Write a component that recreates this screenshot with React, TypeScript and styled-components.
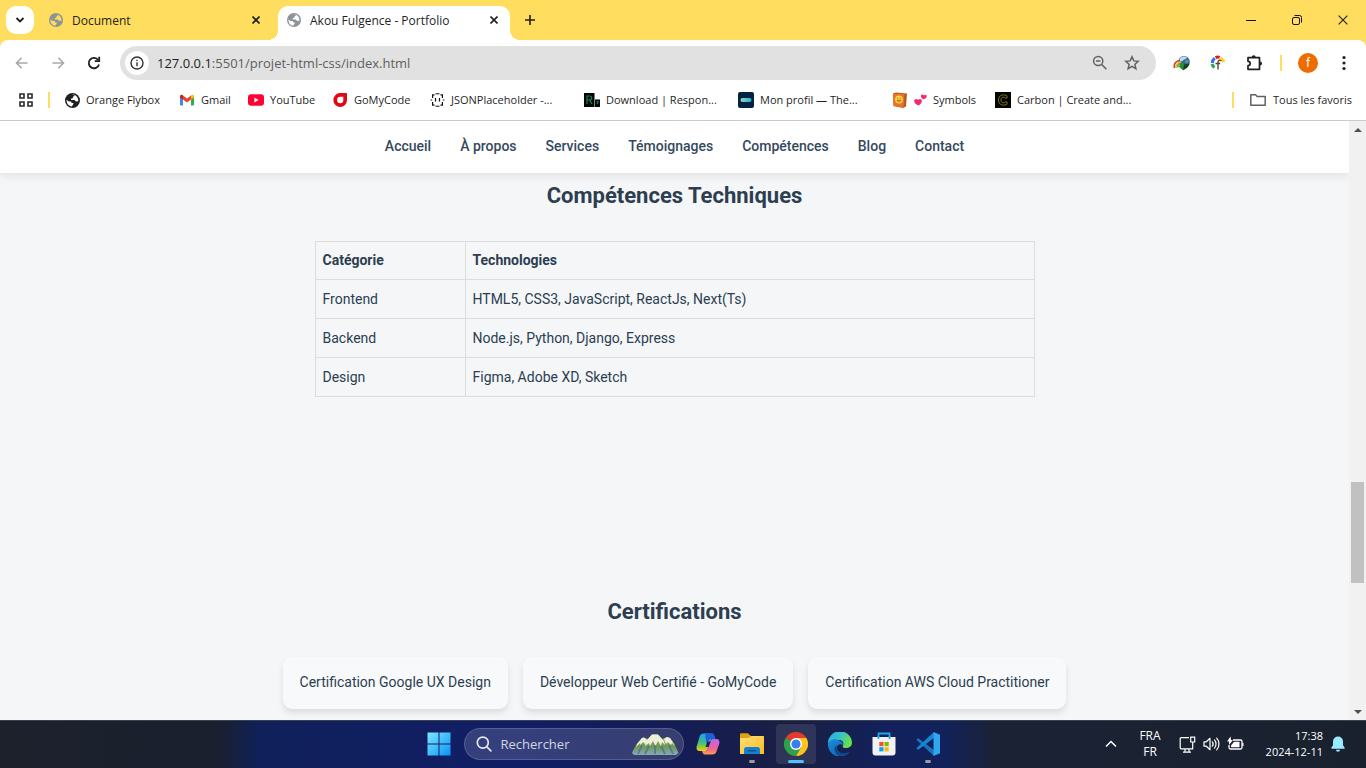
import React from "react";
import styled, { createGlobalStyle } from "styled-components";

const GlobalStyle = createGlobalStyle`
  *, *::before, *::after { box-sizing: border-box; }
  html, body, #root { height: 100%; }
  body { margin: 0; overflow: hidden; font-family: "Open Sans", "Noto Sans", sans-serif; font-size: 12px; color: #1f1f1f; }
  button { border: 0; padding: 0; background: none; color: inherit; font: inherit; }
  input { font: inherit; }
  a { color: inherit; text-decoration: none; }
  svg { display: block; flex: none; }
`;

const Desktop = styled.div`
  display: flex;
  flex-direction: column;
  height: 100vh;
`;

/* ---------- Tab strip ---------- */

const TabStrip = styled.header`
  display: flex;
  align-items: flex-end;
  height: 40px;
  flex: none;
  padding-left: 6px;
  background: #ffdd5e;
`;

const TabSearch = styled.button`
  display: grid;
  place-items: center;
  width: 28px;
  height: 28px;
  margin: 0 4px 6px 0;
  border-radius: 10px;
  background: #fff;
`;

const Tab = styled.div<{ $active?: boolean }>`
  position: relative;
  display: flex;
  align-items: center;
  gap: 9px;
  width: ${(p) => (p.$active ? 232 : 240)}px;
  height: 34px;
  padding: 0 ${(p) => (p.$active ? 8 : 14)}px 6px ${(p) => (p.$active ? 9 : 11)}px;
  border-radius: 10px 10px 0 0;
  background: ${(p) => (p.$active ? "#fff" : "transparent")};

  &::before,
  &::after {
    content: "";
    display: ${(p) => (p.$active ? "block" : "none")};
    position: absolute;
    bottom: 0;
    width: 10px;
    height: 10px;
  }
  &::before {
    left: -10px;
    background: radial-gradient(circle at 0 0, transparent 10px, #fff 10px);
  }
  &::after {
    right: -10px;
    background: radial-gradient(circle at 100% 0, transparent 10px, #fff 10px);
  }
`;

const TabTitle = styled.span`
  flex: 1;
  white-space: nowrap;
`;

const SmallButton = styled.button`
  display: grid;
  place-items: center;
  width: 16px;
  height: 16px;
`;

const NewTab = styled(SmallButton)`
  width: 28px;
  height: 28px;
  margin: 0 auto 6px 6px;
`;

const WindowButtons = styled.div`
  display: flex;
  align-self: stretch;
`;

const WindowButton = styled.button`
  display: grid;
  place-items: center;
  width: 46px;
`;

/* ---------- Toolbar ---------- */

const Chrome = styled.div`
  flex: none;
  background: #ffdd5e;
`;

const ChromeInner = styled.div`
  border-radius: 8px 8px 0 0;
  border-bottom: 1px solid #c9c9c9;
  background: #fff;
`;

const Toolbar = styled.div`
  display: flex;
  align-items: center;
  height: 46px;
  padding: 0 4px;
`;

const ToolButton = styled.button`
  display: grid;
  place-items: center;
  width: 36px;
  height: 32px;
`;

const Omnibox = styled.div`
  display: flex;
  align-items: center;
  flex: 1;
  height: 34px;
  margin: 0 8px;
  padding: 0 8px 0 5px;
  border-radius: 17px;
  background: #e1e1e1;
`;

const SiteInfo = styled.button`
  display: grid;
  place-items: center;
  width: 24px;
  height: 24px;
  border-radius: 12px;
  background: #fff;
`;

const Url = styled.div`
  flex: 1;
  margin-left: 8px;
  font-size: 13px;
  line-height: 20px;
  white-space: nowrap;
  color: #5f5f5f;
`;

const Host = styled.span`
  color: #1f1f1f;
`;

const OmniButton = styled(ToolButton)`
  width: 32px;
`;

const Divider = styled.span<{ $before?: number; $after?: number }>`
  flex: none;
  width: 2px;
  height: 16px;
  margin: 0 ${(p) => p.$after ?? 8}px 0 ${(p) => p.$before ?? 8}px;
  background: #ffdd5e;
`;

const Avatar = styled.span`
  display: grid;
  place-items: center;
  width: 20px;
  height: 20px;
  border-radius: 10px;
  background: #ef6c00;
  color: #fff;
  font: 12px/20px Roboto, sans-serif;
`;

const BookmarkBar = styled.nav`
  display: flex;
  align-items: center;
  height: 34px;
  padding: 0 14px 6px 18px;
  font-size: 11px;
`;

const Bookmark = styled.a<{ $width?: number }>`
  display: flex;
  align-items: center;
  gap: 6px;
  flex: none;
  width: ${(p) => (p.$width ? `${p.$width}px` : "auto")};
  line-height: 16px;
  white-space: nowrap;
`;

const BookmarkSpacer = styled.span`
  flex: 1;
`;

/* ---------- Web page ---------- */

const Viewport = styled.div`
  display: flex;
  flex: 1;
  min-height: 0;
`;

const Page = styled.div`
  flex: 1;
  overflow: hidden;
  background: #f4f6f8;
  color: #2c3e50;
  font-family: Roboto, sans-serif;
  font-size: 14px;
  line-height: 24px;
`;

const SiteNav = styled.nav`
  display: flex;
  justify-content: center;
  gap: 29px;
  padding: 13px 0 15px;
  background: #fff;
  box-shadow: 0 2px 9px rgba(0, 0, 0, 0.1);
  font-weight: 500;
  color: #34495e;
`;

const Section = styled.section<{ $space?: number }>`
  padding: 6px 16px ${(p) => p.$space ?? 0}px;
`;

const Title = styled.h2`
  margin: 0 0 28px;
  font-size: 22px;
  line-height: 34px;
  font-weight: 700;
  text-align: center;
`;

const SkillTable = styled.table`
  width: 100%;
  max-width: 720px;
  margin: 0 auto;
  border-collapse: collapse;
`;

const cell = `
  border: 1px solid #dddddd;
  text-align: left;
`;
const HeadCell = styled.th`
  ${cell}
  padding: 6px 7px 7px;
  &:first-child { width: 150px; }
`;
const Cell = styled.td`
  ${cell}
  padding: 7px;
`;

const Cards = styled.ul`
  display: flex;
  flex-wrap: wrap;
  justify-content: center;
  gap: 15px;
  margin: 0;
  padding: 0;
  list-style: none;
`;

const Card = styled.li`
  padding: 13px 17px 15px;
  border-radius: 9px;
  background: #f8f9fb;
  box-shadow: 0 4px 6px rgba(0, 0, 0, 0.1);
`;

const Scrollbar = styled.div`
  display: flex;
  flex-direction: column;
  align-items: center;
  flex: none;
  width: 17px;
  background: #f1f1f1;
`;

const ScrollArrow = styled.button`
  display: grid;
  place-items: center;
  width: 17px;
  height: 17px;
`;

const ScrollTrack = styled.div`
  display: flex;
  flex-direction: column;
  flex: 1;
`;

const ScrollLead = styled.span`
  flex: 344;
`;
const ScrollThumb = styled.span`
  flex: 101;
  width: 13px;
  background: #c1c1c1;
`;
const ScrollTail = styled.span`
  flex: 120;
`;

/* ---------- Taskbar ---------- */

const Taskbar = styled.footer`
  display: grid;
  grid-template-columns: 1fr auto 1fr;
  align-items: center;
  flex: none;
  height: 48px;
  box-shadow: inset 0 1px #3a4150;
  background: linear-gradient(90deg, #1c212c 0%, #1a202e 16%, #10205a 19%, #111e66 38%, #141d56 50%, #1a1f42 58%, #12215c 65%, #12215c 69%, #1b2234 73%, #1a212e 100%);
  color: #fff;
`;

const TaskCenter = styled.div`
  grid-column: 2;
  display: flex;
  align-items: center;
  gap: 4px;
`;

const TaskButton = styled.button<{ $active?: boolean; $mark?: boolean }>`
  position: relative;
  display: grid;
  place-items: center;
  width: 40px;
  height: 40px;
  border-radius: 4px;
  background: ${(p) => (p.$active ? "rgba(255, 255, 255, 0.1)" : "transparent")};

  &::after {
    content: "";
    display: ${(p) => (p.$mark ? "block" : "none")};
    position: absolute;
    bottom: 1px;
    width: ${(p) => (p.$active ? 16 : 6)}px;
    height: 3px;
    border-radius: 2px;
    background: ${(p) => (p.$active ? "#4cc2ff" : "#9a9ca8")};
  }
`;

const SearchBox = styled.label`
  display: flex;
  align-items: center;
  width: 220px;
  height: 32px;
  margin-left: 1px;
  padding: 0 4px 0 11px;
  border: 1px solid rgba(255, 255, 255, 0.16);
  border-radius: 16px;
  background: rgba(255, 255, 255, 0.15);
`;

const SearchInput = styled.input`
  flex: 1;
  min-width: 0;
  margin-left: 9px;
  padding: 0;
  border: 0;
  outline: 0;
  background: none;
  font-size: 13px;
  &::placeholder { color: #d3d6e2; opacity: 1; }
`;

const Tray = styled.div`
  grid-column: 3;
  display: flex;
  align-items: center;
  justify-content: flex-end;
  padding-right: 21px;
  line-height: 16px;
`;

const Lang = styled.button`
  width: 36px;
  margin: 0 11px 0 13px;
  text-align: center;
  line-height: 16px;
`;

const TrayIcons = styled.div`
  display: flex;
  align-items: center;
  gap: 7px;
`;

const Clock = styled.time`
  width: 79px;
  margin-right: 8px;
  text-align: right;
  font-size: 11px;
`;

/* ---------- Icons ---------- */

const Globe = ({ color, bg, size = 14 }: { color: string; bg: string; size?: number }) => (
  <svg width={size} height={size} viewBox="0 0 14 14">
    <circle cx="7" cy="7" r="7" fill={color} />
    <path d="M1.4 6.4 3.6 8h2.1l.5 1.4H8L7.4 11l-1 1.5C3.6 12.6 1.4 10 1.4 6.4Z" fill={bg} />
    <path d="M6.2 1.6 8.6 1.5 8.8 2.7 7.4 3.5 7.3 4.8 5.5 5.4 5.7 6.6 8.8 6.5 10.2 8 12.4 7.8C12.7 5 11.2 2.8 9 1.8Z" fill={bg} />
  </svg>
);

const CloseIcon = ({ size = 8, w = 1.6 }: { size?: number; w?: number }) => (
  <svg width={size} height={size} viewBox="0 0 8 8" stroke="#1f1f1f" strokeWidth={w} fill="none">
    <path d="m.5.5 7 7m0-7-7 7" />
  </svg>
);

const Arrow = ({ flip }: { flip?: boolean }) => (
  <svg width="16" height="16" viewBox="0 0 16 16" fill="none" stroke="#a8a8a8" strokeWidth="1.6">
    {flip ? <path d="M2.5 8H13M8.3 2.8 13.5 8l-5.2 5.2" /> : <path d="M13.5 8H3M7.7 2.8 2.5 8l5.2 5.2" />}
  </svg>
);

const ReloadIcon = () => (
  <svg width="16" height="16" viewBox="0 0 16 16" fill="none" stroke="#1f1f1f" strokeWidth="1.8">
    <path d="M13 9.4A5.2 5.2 0 1 1 12.2 5" />
    <path d="M13.2 1.8V6.2H8.8" />
  </svg>
);

const InfoIcon = () => (
  <svg width="14" height="14" viewBox="0 0 14 14" fill="none" stroke="#333" strokeWidth="1.4">
    <circle cx="7" cy="7" r="6" />
    <path d="M7 6.2V10.3M7 3.7V5" />
  </svg>
);

const ZoomOutIcon = () => (
  <svg width="16" height="16" viewBox="0 0 16 16" fill="none" stroke="#5f6163" strokeWidth="1.5">
    <circle cx="6.2" cy="6" r="4.6" />
    <path d="m9.7 9.5 4.7 4.8M4 6h4.4" />
  </svg>
);

const StarIcon = () => (
  <svg width="16" height="16" viewBox="0 0 16 16" fill="none" stroke="#5f6163" strokeWidth="1.5">
    <path d="m8 1.8 1.8 4.1 4.5.4-3.4 3 1 4.4L8 11.4l-3.9 2.3 1-4.4-3.4-3 4.5-.4Z" />
  </svg>
);

const IdmIcon = () => (
  <svg width="18" height="16" viewBox="0 0 18 16">
    <circle cx="11" cy="6.8" r="5.8" fill="#2c62b4" />
    <path d="M7.500 3c2-2 5-2 6.500-.5-1 2-2.500 1.500-3.500 2.500S8 7 7 6s-.2-2.300.5-3Z" fill="#c4dce8" />
    <path d="M12.500 5c1.500-.5 3 0 3.500 1.500l-2 2-2-1Z" fill="#6f9c52" />
    <path d="M1.500 13C.5 9 3 5.500 7 5.500" fill="none" stroke="#d93a2b" strokeWidth="1.600" />
    <path d="M3 13C2.500 10 4.500 7 8 7" fill="none" stroke="#f2c230" strokeWidth="1.600" />
    <path d="M4.500 12.500C4.500 10.500 6 8.500 9 8.500" fill="none" stroke="#5db53c" strokeWidth="1.800" />
    <path d="M7 8h4v2.200h3.500L10 15.200 5.500 11.500 7.500 10.500Z" fill="#2d8f2c" />
    <path d="M11 9.500 16.500 8.500C16 12 13 13.800 10 15.200Z" fill="#14461c" />
  </svg>
);

const FontPickerIcon = () => (
  <svg width="16" height="16" viewBox="0 0 16 16" fill="none" strokeWidth="3">
    <path d="M4.500 12.500A6 6 0 0 1 2 9" stroke="#2aa84a" />
    <path d="M2.300 8A6 6 0 0 1 4.800 3.300" stroke="#2277ee" />
    <path d="M5.500 2.600a6 6 0 0 1 4.200-.2" stroke="#e81515" />
    <path d="M10.700 3a6 6 0 0 1 3 4.200" stroke="#ffd21c" />
    <path d="M11.500 5.600C8.500 4.700 8 6 8 8v6.500M5.500 8.500h4.700" stroke="#5a4430" strokeWidth="1.400" />
  </svg>
);

const PuzzleIcon = () => (
  <svg width="18" height="18" viewBox="0 0 18 18">
    <path d="M3 3.700h11.500v11.600H3v-3.600c1.500 0 2.200-1 2.200-2.200S4.500 7.300 3 7.300Z" fill="none" stroke="#1f1f1f" strokeWidth="1.700" strokeLinejoin="round" />
    <path d="M6.700 3.200a2 2 0 0 1 4 0ZM15 7.500a2 2 0 0 1 0 4Z" fill="#1f1f1f" />
  </svg>
);

const DotsIcon = () => (
  <svg width="4" height="16" viewBox="0 0 4 16" fill="#1f1f1f">
    <circle cx="2" cy="2.500" r="1.600" /><circle cx="2" cy="8" r="1.600" /><circle cx="2" cy="13.500" r="1.600" />
  </svg>
);

const GridIcon = () => (
  <svg width="16" height="16" viewBox="0 0 16 16" fill="none" stroke="#2a2a2a" strokeWidth="1.600">
    <path d="M2 2h4v4H2ZM10 2h4v4h-4ZM2 10h4v4H2ZM10 10h4v4h-4Z" />
  </svg>
);

const GmailIcon = () => (
  <svg width="16" height="16" viewBox="0 0 16 16">
    <path d="M1 4.500 4 6.500V13.500H2a1 1 0 0 1-1-1Z" fill="#4285f4" />
    <path d="M15 4.500 12 6.500V13.500h2a1 1 0 0 0 1-1Z" fill="#34a853" />
    <path d="M4 3.500 8 6.500 12 3.500V7.500L8 10.500 4 7.500Z" fill="#ea4335" />
    <path d="M12 3.300c1.500-1.200 3-.5 3 1.200v.9L12 7.600Z" fill="#fbbc04" />
    <path d="M4 3.300C2.500 2.100 1 2.800 1 4.500v.9L4 7.600Z" fill="#c5221f" />
  </svg>
);

const YoutubeIcon = () => (
  <svg width="16" height="16" viewBox="0 0 16 16">
    <rect y="2.300" width="16" height="11.400" rx="3" fill="#ff0033" />
    <path d="M6.400 5.600v4.800L10.600 8Z" fill="#fff" />
  </svg>
);

const GoMyCodeIcon = () => (
  <svg width="15" height="16" viewBox="0 0 15 16">
    <path d="M7 1h6.300c.5 0 .7.300.7.700V8A6.800 7 0 1 1 7 1Z" fill="#e30613" />
    <path d="M7.200 4.800h3.100V8a3.100 3.200 0 1 1-3.100-3.200Z" fill="#fff" />
  </svg>
);

const JsonIcon = () => (
  <svg width="15" height="16" viewBox="0 0 15 16" fill="none" stroke="#111" strokeWidth="1.200">
    <path d="M5.500 1.800h4M5.500 14.200h4" strokeWidth="1" />
    <path d="M4.500 2.800H2.600V6M10.500 2.800h1.900V6M4.500 13.200H2.600V10M10.500 13.200h1.900V10" />
    <path d="M.6 8h1.600M12.800 8h1.600" />
    <path d="M5.500 6v3.500M9.500 6v3.500" />
  </svg>
);

const ResponsivelyIcon = () => (
  <svg width="16" height="16" viewBox="0 0 16 16">
    <path d="M0 1h10.500v14H0ZM11 7.500h5V15h-5Z" fill="#020606" />
    <path d="M3 12V4h2.500c3 0 3 4 0 4H3m2.500 0L8 12M12.500 9.500h1.500L13.200 12" fill="none" stroke="#19805c" strokeWidth="1.200" />
  </svg>
);

const ForageIcon = () => (
  <svg width="16" height="16" viewBox="0 0 16 16">
    <defs><linearGradient id="pill"><stop stopColor="#94d6b8" /><stop offset="1" stopColor="#23b0dc" /></linearGradient></defs>
    <rect width="16" height="16" rx="2" fill="#04233f" />
    <rect x="2.500" y="6" width="11" height="4" rx="2" fill="url(#pill)" />
  </svg>
);

const BookIcon = () => (
  <svg width="16" height="16" viewBox="0 0 16 16">
    <path d="M1 1.500 4 .5l11 1-1 13-3 1.500L1.500 14Z" fill="#b55a24" />
    <path d="M1 1.500 12.500 2 11.500 15.500 1.500 14Z" fill="#e87424" />
    <circle cx="7" cy="7.500" r="3.900" fill="#ffd24a" />
    <path d="M5 8.300c.6 2 3.200 2 4 0ZM5.500 5.500v1.300M8.300 5.500v1.300" stroke="#9a5010" strokeWidth=".8" fill="none" />
  </svg>
);

const HeartsIcon = () => (
  <svg width="13" height="14" viewBox="0 0 13 14" fill="#f8296a" role="img" aria-label="💕">
    <path d="M4.800 12.600C2 11.500.3 10 .2 8.200.1 6 2.700 5 4.100 6.900 5.400 5.300 8 6 7.900 8c-.1 1.800-1.600 3.200-3.100 4.600Z" />
    <path d="M10 6.300C7.800 5.300 6.700 4.300 6.900 2.900 7.200 1.300 9.200 1 9.900 2.400 11.200 1.200 13 2.100 12.700 3.700 12.500 5 11.300 5.700 10 6.300Z" />
  </svg>
);

const CarbonIcon = () => (
  <svg width="16" height="16" viewBox="0 0 16 16" fill="none">
    <path d="M0 0h16v16H0Z" fill="#050500" />
    <path d="M12 6V3.800C9 2 3.500 2.500 3.500 8S9 14 12 12.200V10M10.200 6C8.500 4.500 6 5 6 8s2.500 3.500 4.200 2M10.200 6H12M10.200 10H12" stroke="#8c7d1e" strokeWidth=".9" />
  </svg>
);

const FolderIcon = () => (
  <svg width="18" height="16" viewBox="0 0 18 16" fill="none" stroke="#5f6163" strokeWidth="1.500">
    <path d="M1.800 2.800h4.700l1.700 1.800h8v8.600H1.800Z" strokeLinejoin="round" />
  </svg>
);

const Caret = ({ down }: { down?: boolean }) => (
  <svg width="8" height="4" viewBox="0 0 8 4" fill="#505050">
    <path d={down ? "M0 0h8L4 4Z" : "M0 4h8L4 0Z"} />
  </svg>
);

const WindowsIcon = () => (
  <svg width="24" height="24" viewBox="0 0 24 24">
    <defs><linearGradient id="win" x1="0" y1="0" x2="1" y2="1"><stop stopColor="#7ce8ff" /><stop offset="1" stopColor="#0a93f5" /></linearGradient></defs>
    <path d="M.5.500h11v11H.5ZM12.500.500h11v11h-11ZM.5 12.500h11v11H.5ZM12.500 12.500h11v11h-11Z" fill="url(#win)" />
  </svg>
);

const SearchIcon = () => (
  <svg width="16" height="16" viewBox="0 0 16 16" fill="none" stroke="#e4e6ee" strokeWidth="1.700" strokeLinecap="round">
    <circle cx="6.800" cy="6.600" r="5.500" /><path d="m10.900 10.800 4 4" />
  </svg>
);

const MountainIcon = () => (
  <svg width="48" height="22" viewBox="0 0 48 22">
    <defs><linearGradient id="hill" x1="0" y1="0" x2="0" y2="1"><stop stopColor="#a3ae8c" /><stop offset=".6" stopColor="#6d9a52" /><stop offset="1" stopColor="#86aab8" /></linearGradient></defs>
    <path d="M1 20C4 13 7 9 11 5l2-.5 4 1.500L21 1.500h6L31 6l5-2 3 1c4 4 6 9 8.500 15L45 22H3Z" fill="url(#hill)" />
    <path d="M15 8 21 1.500h6L33 8l1 4-3-3-1 4-3-5-2.500 5L22 8l-3 5-1-3-4 3ZM6 11 11 5l2-.5L16 7l-2 4-2-2-2.500 3L9 10l-4 4ZM33 6l3-2 3 1 5 8-3-3-1 2-3-3-2 2Z" fill="#eef0d8" />
    <path d="m11 12-4 9M18 13l-4 8M24 12v9M30 13l4 8M38 12l4 9" stroke="#4f669c" strokeWidth="1.800" opacity=".7" />
  </svg>
);

const CopilotIcon = () => (
  <svg width="24" height="24" viewBox="0 0 24 24">
    <defs>
      <linearGradient id="cpl" x1="0" y1="0" x2="0" y2="1"><stop stopColor="#1fa0f5" /><stop offset=".55" stopColor="#45c07a" /><stop offset="1" stopColor="#f5d100" /></linearGradient>
      <linearGradient id="cpr" x1="0" y1="0" x2="0" y2="1"><stop stopColor="#b868f5" /><stop offset=".6" stopColor="#f0609a" /><stop offset="1" stopColor="#ff9a4a" /></linearGradient>
    </defs>
    <path d="M8 1.500h8c1.700 0 2 1.500 2.500 3l.8 2.500h-4L12 16c-.8 2.500-2 3-4 3H4c-3 0-4-2-3.200-5l2.500-8.500C4 3 5 1.500 8 1.500Z" fill="url(#cpl)" />
    <path d="M11 1.500h5c1.700 0 2 1.500 2.500 3l.8 2.500h-4c-2 0-2.700 1-3.300 3L11 13 9.500 6C9 3.500 9.500 1.500 11 1.500Z" fill="#1d5fd8" />
    <path d="M16 22.500H9c-1.700 0-2.500-1.500-3-3.500h2c2 0 3.200-.5 4-3l2.500-7c.6-1.500 1.500-2 3-2H20c3 0 4 2 3.200 5l-2.500 7c-.8 2.500-2 3.500-4.700 3.500Z" fill="url(#cpr)" />
    <path d="M11.500 9.500h3.200L12.500 15H9.500Z" fill="#1a2158" />
  </svg>
);

const ExplorerIcon = () => (
  <svg width="24" height="24" viewBox="0 0 24 24">
    <defs><linearGradient id="fold" x1="0" y1="0" x2="1" y2="1"><stop stopColor="#ffdf7a" /><stop offset="1" stopColor="#fdbb1e" /></linearGradient></defs>
    <path d="M0 2.500C0 1.700.6 1.200 1.300 1.200h6.500L11 4h11.700c.8 0 1.300.5 1.300 1.300V9H0Z" fill="#e0a10a" />
    <path d="M0 6h8.500L11 4h11.700c.8 0 1.300.5 1.300 1.300V22H0Z" fill="url(#fold)" />
    <path d="M4 22v-4.500C4 16 5 15 6.500 15h11c1.500 0 2.500 1 2.500 2.500V22Z" fill="#1580d2" />
    <path d="M8 18.700h8" stroke="#0c4f8c" strokeWidth="1.500" />
  </svg>
);

const ChromeIcon = () => (
  <svg width="24" height="24" viewBox="0 0 24 24">
    <path d="M12 12 1.600 6A12 12 0 0 1 22.400 6Z" fill="#e33b2e" />
    <path d="M12 12 1.600 6A12 12 0 0 0 12 24L17.200 15Z" fill="#2da14c" />
    <path d="M12 12V6H22.400A12 12 0 0 1 12 24L17.200 15Z" fill="#fcc31e" />
    <path d="M1.600 6 6.800 15 12 12Z" fill="#2da14c" />
    <circle cx="12" cy="12" r="6" fill="#fff" /><circle cx="12" cy="12" r="4.600" fill="#3b7ded" />
  </svg>
);

const EdgeIcon = () => (
  <svg width="24" height="24" viewBox="0 0 24 24">
    <defs>
      <linearGradient id="edt" x1="0" y1="0" x2="1" y2=".4"><stop stopColor="#2aa9e0" /><stop offset=".5" stopColor="#35c0d0" /><stop offset="1" stopColor="#67e04c" /></linearGradient>
      <linearGradient id="edb" x1="0" y1="0" x2="1" y2="1"><stop stopColor="#1c8fdf" /><stop offset="1" stopColor="#0b57a6" /></linearGradient>
    </defs>
    <path d="M0 12A12 12 0 0 1 24 10.500c0 4-3 5.500-6 5.500-2.500 0-4-1-3-2.500S15.500 8 11 8C5 8 1 10.500 0 12Z" fill="url(#edt)" />
    <path d="M0 12C1 8 5 6.500 9 7.500c4 1 6.500 3.500 6 5.500-3-2-7 0-6 4 1 3.500 4.500 5.500 9 4.500l3.500-1.500A12 12 0 0 1 0 12Z" fill="url(#edb)" />
    <path d="M9 13c-1.500 4 1.500 8 6 8.500 3 0 5-1 7-2.500A12 12 0 0 1 12 24c-5-1-8-8-3-11Z" fill="#0e4a94" />
  </svg>
);

const StoreIcon = () => (
  <svg width="24" height="24" viewBox="0 0 24 24">
    <path d="M6.500 6V1.500h11V6" fill="none" stroke="#1fa7e8" strokeWidth="1.800" />
    <path d="M.5 5h23v15.500a3 3 0 0 1-3 3h-17a3 3 0 0 1-3-3Z" fill="#f1f1f3" />
    <path d="M6.500 7V4M17.500 7V4" fill="none" stroke="#1fa7e8" strokeWidth="1.800" />
    <path d="M7.300 10h4.200v4.200H7.300Z" fill="#f25022" /><path d="M12.500 10h4.200v4.200h-4.200Z" fill="#7fba00" />
    <path d="M7.300 15.200h4.200v4.200H7.300Z" fill="#00a4ef" /><path d="M12.500 15.200h4.200v4.200h-4.200Z" fill="#ffb900" />
  </svg>
);

const CodeIcon = () => (
  <svg width="24" height="24" viewBox="0 0 24 24">
    <path d="M.3 7.800 2.200 6.200 18 18v6Z" fill="#1873bd" />
    <path d="M.3 16.200 2.200 17.800 18 6V0Z" fill="#1487d4" />
    <path d="M17.500 0 24 2.800V21.200L17.500 24Z" fill="#31a6f0" />
  </svg>
);

const NetworkIcon = () => (
  <svg width="17" height="17" viewBox="0 0 17 17" fill="none" stroke="#fff" strokeWidth="1.200">
    <path d="M10 1.600H2.200A1 1 0 0 0 1.200 2.600v9.200a1 1 0 0 0 1 1h11.500V8M6 13v3M10 13v3M4 16.200h8M11.700 1.200h4V6h-4ZM13.700 6v7" />
  </svg>
);

const SpeakerIcon = () => (
  <svg width="17" height="16" viewBox="0 0 17 16" fill="none" stroke="#fff" strokeWidth="1.200" strokeLinecap="round" strokeLinejoin="round">
    <path d="M1 5.800h2.300L7 2.300v11.400L3.300 10.200H1ZM9.300 5.800c1 1.200 1 3.200 0 4.400M11.500 3.900c2 2.200 2 6 0 8.200M13.700 2.100c3 3.200 3 8.600 0 11.800" />
  </svg>
);

const BatteryIcon = () => (
  <svg width="17" height="16" viewBox="0 0 17 16">
    <path d="M6 4h7.500a1.500 1.500 0 0 1 1.500 1.500v6a1.500 1.500 0 0 1-1.500 1.500h-10A1.500 1.500 0 0 1 2 11.500V9" fill="none" stroke="#fff" strokeWidth="1.300" />
    <path d="M7 5.800h5.500v5.400H4V9.500ZM15.300 7h1.200v3h-1.200ZM3.500.5 0 5.500h2V9l4-5H4Z" fill="#fff" />
  </svg>
);

const BellIcon = () => (
  <svg width="14" height="16" viewBox="0 0 14 16" fill="#99ebff">
    <path d="M7 .5a5 5 0 0 1 5 5v3.700l1.700 2.600c.2.500 0 .9-.6.900H.9c-.6 0-.8-.4-.6-.9L2 9.200V5.500a5 5 0 0 1 5-5ZM5 13.700h4a2 2 0 0 1-4 0Z" />
  </svg>
);

/* ---------- Data ---------- */

const bookmarks = [
  { label: "Orange Flybox", width: 114, icon: <Globe color="#1f1f1f" bg="#fff" size={15} /> },
  { label: "Gmail", width: 69, icon: <GmailIcon /> },
  { label: "YouTube", width: 85, icon: <YoutubeIcon /> },
  { label: "GoMyCode", width: 97, icon: <GoMyCodeIcon /> },
  { label: "JSONPlaceholder -...", width: 154, icon: <JsonIcon /> },
  { label: "Download | Respon...", width: 154, icon: <ResponsivelyIcon /> },
  { label: "Mon profil — The...", width: 154, icon: <ForageIcon /> },
  { label: "Symbols", width: 103, icon: <><BookIcon /><HeartsIcon /></> },
  { label: "Carbon | Create and...", width: 140, icon: <CarbonIcon /> },
];

const links = ["Accueil", "À propos", "Services", "Témoignages", "Compétences", "Blog", "Contact"];

const skills = [
  ["Frontend", "HTML5, CSS3, JavaScript, ReactJs, Next(Ts)"],
  ["Backend", "Node.js, Python, Django, Express"],
  ["Design", "Figma, Adobe XD, Sketch"],
];

const certifications = [
  "Certification Google UX Design",
  "Développeur Web Certifié - GoMyCode",
  "Certification AWS Cloud Practitioner",
];

export default function App() {
  return (
    <Desktop>
      <GlobalStyle />
      <TabStrip>
        <TabSearch aria-label="Rechercher dans les onglets">
          <svg width="10" height="6" viewBox="0 0 10 6" fill="none" stroke="#1f1f1f" strokeWidth="1.800"><path d="m1.500 1 3.500 3.500L8.500 1" /></svg>
        </TabSearch>
        <Tab>
          <Globe color="#8e9398" bg="#ffdd5e" />
          <TabTitle>Document</TabTitle>
          <SmallButton aria-label="Fermer"><CloseIcon /></SmallButton>
        </Tab>
        <Tab $active>
          <Globe color="#8e9398" bg="#fff" />
          <TabTitle>Akou Fulgence - Portfolio</TabTitle>
          <SmallButton aria-label="Fermer"><CloseIcon /></SmallButton>
        </Tab>
        <NewTab aria-label="Nouvel onglet">
          <svg width="10" height="10" viewBox="0 0 10 10" stroke="#1f1f1f" strokeWidth="1.600"><path d="M5 0v10M0 5h10" /></svg>
        </NewTab>
        <WindowButtons>
          <WindowButton aria-label="Réduire">
            <svg width="10" height="10" viewBox="0 0 10 10" fill="#111"><path d="M0 5h10v1H0Z" /></svg>
          </WindowButton>
          <WindowButton aria-label="Restaurer">
            <svg width="10" height="10" viewBox="0 0 10 10" fill="none" stroke="#111"><rect x=".5" y="2.500" width="7" height="7" rx="1.500" /><path d="M2.500.500H7.500a2 2 0 0 1 2 2V7.500" /></svg>
          </WindowButton>
          <WindowButton aria-label="Fermer la fenêtre"><CloseIcon size={10} w={0.9} /></WindowButton>
        </WindowButtons>
      </TabStrip>

      <Chrome>
        <ChromeInner>
          <Toolbar>
            <ToolButton aria-label="Précédent"><Arrow /></ToolButton>
            <ToolButton aria-label="Suivant"><Arrow flip /></ToolButton>
            <ToolButton aria-label="Actualiser"><ReloadIcon /></ToolButton>
            <Omnibox>
              <SiteInfo aria-label="Informations sur le site"><InfoIcon /></SiteInfo>
              <Url><Host>127.0.0.1</Host>:5501/projet-html-css/index.html</Url>
              <OmniButton aria-label="Zoom"><ZoomOutIcon /></OmniButton>
              <OmniButton aria-label="Ajouter aux favoris"><StarIcon /></OmniButton>
            </Omnibox>
            <ToolButton aria-label="Téléchargements"><IdmIcon /></ToolButton>
            <ToolButton aria-label="Polices"><FontPickerIcon /></ToolButton>
            <ToolButton aria-label="Extensions"><PuzzleIcon /></ToolButton>
            <Divider />
            <ToolButton aria-label="Profil"><Avatar>f</Avatar></ToolButton>
            <ToolButton aria-label="Menu"><DotsIcon /></ToolButton>
          </Toolbar>
          <BookmarkBar>
            <SmallButton aria-label="Applications"><GridIcon /></SmallButton>
            <Divider $before={14} $after={15} />
            {bookmarks.map((b) => (
              <Bookmark href="#" key={b.label} $width={b.width}>{b.icon}{b.label}</Bookmark>
            ))}
            <BookmarkSpacer />
            <Divider $after={15} />
            <Bookmark href="#"><FolderIcon />Tous les favoris</Bookmark>
          </BookmarkBar>
        </ChromeInner>
      </Chrome>

      <Viewport>
        <Page>
          <SiteNav>
            {links.map((l) => <a href="#" key={l}>{l}</a>)}
          </SiteNav>
          <main>
            <Section $space={192}>
              <Title>Compétences Techniques</Title>
              <SkillTable>
                <thead>
                  <tr><HeadCell>Catégorie</HeadCell><HeadCell>Technologies</HeadCell></tr>
                </thead>
                <tbody>
                  {skills.map(([name, tech]) => (
                    <tr key={name}><Cell>{name}</Cell><Cell>{tech}</Cell></tr>
                  ))}
                </tbody>
              </SkillTable>
            </Section>
            <Section>
              <Title>Certifications</Title>
              <Cards>
                {certifications.map((c) => <Card key={c}>{c}</Card>)}
              </Cards>
            </Section>
          </main>
        </Page>
        <Scrollbar>
          <ScrollArrow aria-label="Défiler vers le haut"><Caret /></ScrollArrow>
          <ScrollTrack><ScrollLead /><ScrollThumb /><ScrollTail /></ScrollTrack>
          <ScrollArrow aria-label="Défiler vers le bas"><Caret down /></ScrollArrow>
        </Scrollbar>
      </Viewport>

      <Taskbar>
        <TaskCenter>
          <TaskButton aria-label="Démarrer"><WindowsIcon /></TaskButton>
          <SearchBox>
            <SearchIcon />
            <SearchInput placeholder="Rechercher" aria-label="Rechercher" />
            <MountainIcon />
          </SearchBox>
          <TaskButton aria-label="Copilot"><CopilotIcon /></TaskButton>
          <TaskButton $mark aria-label="Explorateur"><ExplorerIcon /></TaskButton>
          <TaskButton $active $mark aria-label="Chrome"><ChromeIcon /></TaskButton>
          <TaskButton aria-label="Edge"><EdgeIcon /></TaskButton>
          <TaskButton aria-label="Microsoft Store"><StoreIcon /></TaskButton>
          <TaskButton $mark aria-label="Visual Studio Code"><CodeIcon /></TaskButton>
        </TaskCenter>
        <Tray>
          <SmallButton aria-label="Icônes masquées">
            <svg width="12" height="8" viewBox="0 0 12 8" fill="none" stroke="#fff" strokeWidth="1.500"><path d="m1 6.500 5-5 5 5" /></svg>
          </SmallButton>
          <Lang>FRA<br />FR</Lang>
          <TrayIcons><NetworkIcon /><SpeakerIcon /><BatteryIcon /></TrayIcons>
          <Clock>17:38<br />2024-12-11</Clock>
          <BellIcon />
        </Tray>
      </Taskbar>
    </Desktop>
  );
}
